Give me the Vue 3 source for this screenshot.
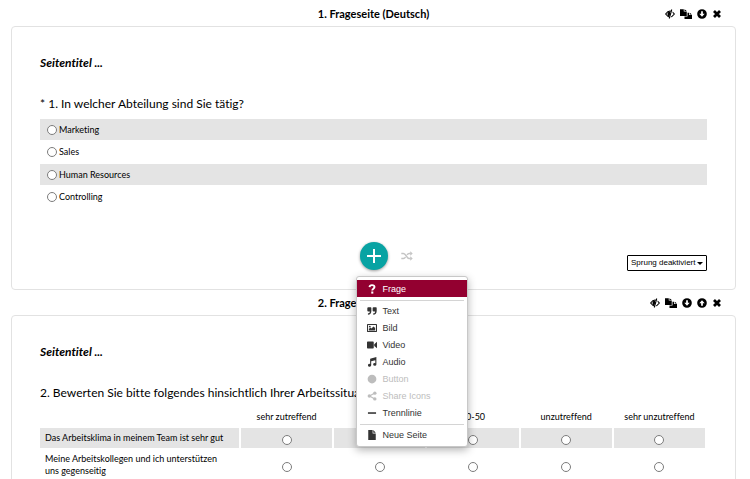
<script setup>
import { ref } from 'vue'

const departments = ['Marketing', 'Sales', 'Human Resources', 'Controlling']
const department = ref('')
const jump = ref('off')

const scale = ['sehr zutreffend', 'zutreffend', '50-50', 'unzutreffend', 'sehr unzutreffend']
const statements = [
  'Das Arbeitsklima in meinem Team ist sehr gut',
  'Meine Arbeitskollegen und ich unterstützen uns gegenseitig',
]

const pageActions = {
  first: ['preview', 'copy', 'down', 'remove'],
  middle: ['preview', 'copy', 'down', 'up', 'remove'],
}
const actionLabels = {
  preview: 'Vorschau',
  copy: 'Kopieren',
  down: 'Nach unten',
  up: 'Nach oben',
  remove: 'Löschen',
}

const icons = {
  preview:
    '<path d="M1 8Q8 -1.500 15 8Q8 17.500 1 8Z" fill="none" stroke="currentColor" stroke-width="1.800"/><path d="M8 4a4 4 0 1 0 0 8z"/><path d="M12 1L7.400 15" stroke="#fff" stroke-width="2.600"/><path d="M10.800 .8L6.800 15.200" stroke="currentColor" stroke-width="1.700"/>',
  copy:
    '<path d="M0 .5h5v3.500h4v7H0z"/><path d="M8 6h4v3.500h4V16H6v-4h4V6z"/><path d="M6 .5l3 2.700H6zM13 6l3 2.600h-3z"/>',
  down:
    '<path fill-rule="evenodd" d="M8 .3a7.700 7.700 0 1 0 0 15.400A7.700 7.700 0 0 0 8 .3zM6.600 3.600h2.800v4h2.900L8 12.400 3.700 7.600h2.900z"/>',
  up:
    '<path fill-rule="evenodd" d="M8 .3a7.700 7.700 0 1 0 0 15.400A7.700 7.700 0 0 0 8 .3zM6.600 12.400h2.800v-4h2.900L8 3.600 3.700 8.400h2.900z"/>',
  remove: '<path d="M3.200 3.200l9.600 9.600M12.800 3.200l-9.600 9.600" stroke="currentColor" stroke-width="4.400"/>',
  question:
    '<path d="M4 5C4.300 2.700 5.700 1.700 8 1.700c2.500 0 4 1.200 4 3.200 0 2.500-3.600 2.700-3.600 5.400" fill="none" stroke="currentColor" stroke-width="3"/><path d="M6.800 12h3.300v3.400H6.800z"/>',
  quote:
    '<path d="M2 2h3.400C6.600 2 7 2.600 7 3.600V8c0 3.600-2 6-5.500 6v-2.400c2 0 3-1 3-3H2C1 8.600.5 8 .5 7V3.600C.5 2.600 1 2 2 2zM10.500 2h3.400c1.200 0 1.600.6 1.600 1.600V8c0 3.600-2 6-5.500 6v-2.400c2 0 3-1 3-3h-2.500C9.500 8.600 9 8 9 7V3.600C9 2.600 9.500 2 10.500 2z"/>',
  image:
    '<path fill-rule="evenodd" d="M1.500 1.500h13c.8 0 1.500.7 1.500 1.500v10c0 .8-.7 1.500-1.500 1.500h-13C.7 14.500 0 13.800 0 13V3c0-.8.7-1.500 1.500-1.500zM1.700 3.200v9.600h12.600V3.200z"/><path d="M3 11.800V9.500l2.300-2.300L7 8.900l3.500-3.500L13 8v3.800z"/><circle cx="4.500" cy="5.700" r="1.400"/>',
  video:
    '<path d="M1.600 2.500h7.600c.9 0 1.600.7 1.600 1.600v7.800c0 .9-.7 1.600-1.600 1.600H1.600c-.9 0-1.600-.7-1.600-1.600V4.100c0-.9.700-1.600 1.600-1.600zM11.600 6.600L16 2.700v10.600l-4.400-3.900z"/>',
  music:
    '<path d="M5 2.700L15 0v11.800a2.600 2.200 0 1 1-1.700-2V5L6.700 6.800v6.400A2.600 2.200 0 1 1 5 11.200z"/>',
  circle: '<circle cx="8" cy="8" r="7"/>',
  share:
    '<path d="M12.500 3.300L4 8l8.500 4.700" fill="none" stroke="currentColor" stroke-width="1.800"/><circle cx="12.500" cy="3.400" r="2.700"/><circle cx="3.700" cy="8" r="2.700"/><circle cx="12.500" cy="12.600" r="2.700"/>',
  minus: '<path d="M1.500 6.800h13v2.500h-13z"/>',
  file: '<path d="M2 0h7v5.500h5V16H2z"/><path d="M10 0l4 4.500h-4z"/>',
}

const menu = [
  [{ icon: 'question', label: 'Frage', active: true }],
  [
    { icon: 'quote', label: 'Text' },
    { icon: 'image', label: 'Bild' },
    { icon: 'video', label: 'Video' },
    { icon: 'music', label: 'Audio' },
    { icon: 'circle', label: 'Button', disabled: true },
    { icon: 'share', label: 'Share Icons', disabled: true },
    { icon: 'minus', label: 'Trennlinie' },
  ],
  [{ icon: 'file', label: 'Neue Seite' }],
]
</script>

<template>
  <main class="editor">
    <section>
      <header class="page-head">
        <h2>1. Frageseite (Deutsch)</h2>
        <div class="actions">
          <button v-for="a in pageActions.first" :key="a" type="button" :class="a" :aria-label="actionLabels[a]">
            <svg viewBox="0 0 16 16" preserveAspectRatio="none" fill="currentColor" v-html="icons[a]"></svg>
          </button>
        </div>
      </header>
      <div class="card">
        <h3>Seitentitel ...</h3>
        <fieldset>
          <legend>* 1. In welcher Abteilung sind Sie tätig?</legend>
          <div class="options">
            <label v-for="d in departments" :key="d">
              <input v-model="department" type="radio" name="department" :value="d" />
              <span>{{ d }}</span>
            </label>
          </div>
        </fieldset>
        <footer class="card-foot">
          <div class="insert">
            <button type="button" class="add" aria-label="Element hinzufügen" aria-haspopup="menu" aria-expanded="true">
              <svg viewBox="0 0 14 14"><path d="M7 0v14M0 7h14" /></svg>
            </button>
            <div class="menu" role="menu">
              <div v-for="(group, g) in menu" :key="g" class="group" role="group">
                <button
                  v-for="item in group"
                  :key="item.label"
                  type="button"
                  role="menuitem"
                  :class="{ active: item.active }"
                  :disabled="item.disabled"
                >
                  <svg viewBox="0 0 16 16" fill="currentColor" v-html="icons[item.icon]"></svg>
                  <span>{{ item.label }}</span>
                </button>
              </div>
            </div>
          </div>
          <div class="foot-tools">
            <button type="button" class="shuffle" aria-label="Zufällige Reihenfolge">
              <svg viewBox="0 0 16 14" fill="none" stroke="currentColor" stroke-width="2">
                <path d="M0 3.500h3c3.500 0 4.500 7 8 7h2M0 10.500h3c1.300 0 2.200-.9 3-2M8 5.500c.8-1.100 1.700-2 3-2h2" />
                <path d="M12.500.5l3.500 3-3.500 3zM12.500 7.500l3.500 3-3.500 3z" fill="currentColor" stroke="none" />
              </svg>
            </button>
            <div class="jump">
              <select v-model="jump" aria-label="Sprung">
                <option value="off">Sprung deaktiviert</option>
              </select>
              <svg viewBox="0 0 6 3"><path d="M0 0h6L3 3z" /></svg>
            </div>
          </div>
        </footer>
      </div>
    </section>

    <section>
      <header class="page-head">
        <h2>2. Frageseite (Deutsch)</h2>
        <div class="actions">
          <button v-for="a in pageActions.middle" :key="a" type="button" :class="a" :aria-label="actionLabels[a]">
            <svg viewBox="0 0 16 16" preserveAspectRatio="none" fill="currentColor" v-html="icons[a]"></svg>
          </button>
        </div>
      </header>
      <div class="card">
        <h3>Seitentitel ...</h3>
        <p id="matrix-title" class="question">2. Bewerten Sie bitte folgendes hinsichtlich Ihrer Arbeitssituation</p>
        <table aria-labelledby="matrix-title">
          <thead>
            <tr>
              <td></td>
              <th v-for="s in scale" :key="s" scope="col">{{ s }}</th>
            </tr>
          </thead>
          <tbody>
            <tr v-for="(statement, i) in statements" :key="i">
              <th scope="row">{{ statement }}</th>
              <td v-for="s in scale" :key="s">
                <input type="radio" :name="'statement-' + i" :value="s" :aria-label="statement + ': ' + s" />
              </td>
            </tr>
          </tbody>
        </table>
      </div>
    </section>
  </main>
</template>

<style>
body {
  margin: 0;
  background: #fff;
}
</style>

<style scoped>
.editor {
  box-sizing: border-box;
  height: 100vh;
  overflow: hidden;
  padding: 1px 14px 0 11px;
  font-family: Lato, "Liberation Sans", sans-serif;
  font-size: 9px;
  line-height: 12px;
  font-variant-ligatures: none;
  color: #000;
}
button,
select {
  margin: 0;
  padding: 0;
  border: 0;
  background: none;
  color: inherit;
  font: inherit;
}
svg {
  display: block;
}
.page-head {
  display: grid;
  grid-template-columns: 1fr auto 1fr;
  align-items: center;
  height: 25px;
}
h2 {
  grid-column: 2;
  margin: 0;
  font-size: 11px;
  font-weight: 700;
}
.actions {
  display: flex;
  justify-content: flex-end;
  gap: 5px;
  padding-right: 14px;
}
.actions svg {
  width: 10px;
  height: 10px;
}
.actions .copy svg {
  width: 12px;
}
.card {
  border: 1px solid #e2e2e2;
  border-radius: 4px;
  padding: 28px 28px 18px;
}
h3 {
  margin: 0 0 23px;
  font-size: 12px;
  line-height: 16px;
  font-weight: 700;
  font-style: italic;
}
fieldset {
  margin: 0;
  padding: 0;
  border: 0;
  min-width: 0;
}
legend,
.question {
  margin: 0;
  padding: 0;
  font-size: 12px;
  line-height: 20px;
}
.options {
  display: grid;
  align-content: space-between;
  height: 89px;
  margin-top: 5px;
}
.options label {
  display: flex;
  align-items: center;
  gap: 2px;
  height: 21px;
  padding-left: 7px;
}
.options label:nth-child(odd),
tbody tr:nth-child(odd) > * {
  background: #e4e4e4;
}
input {
  appearance: none;
  box-sizing: border-box;
  width: 10px;
  height: 10px;
  margin: 0;
  border: 1px solid #7c7c7c;
  border-radius: 50%;
  background: #fff;
}
input:checked {
  background: #333;
}
.card-foot {
  display: grid;
  grid-template-columns: 1fr auto 1fr;
  height: 29px;
  margin-top: 34px;
}
.insert {
  grid-column: 2;
  position: relative;
  z-index: 1;
}
.add {
  display: grid;
  place-items: center;
  width: 28px;
  height: 28px;
  border-radius: 50%;
  background: #08a3a3;
  box-shadow: 0 1px 3px rgba(0, 0, 0, 0.4);
}
.add svg {
  width: 14px;
  height: 14px;
  stroke: #fff;
  stroke-width: 2;
}
.menu {
  position: absolute;
  top: 34px;
  left: -4px;
  box-sizing: border-box;
  width: 112px;
  padding: 3px 0;
  border: 1px solid #c8c8c8;
  border-radius: 3px;
  background: #fff;
  box-shadow: 0 3px 8px rgba(0, 0, 0, 0.3);
  font-family: "Liberation Sans", Arial, sans-serif;
  color: #333;
}
.group + .group::before {
  content: '';
  display: block;
  height: 1px;
  margin: 3px 3px 1px;
  background: #d4d4d4;
}
.menu button {
  display: flex;
  align-items: center;
  gap: 6px;
  width: 100%;
  height: 17px;
  padding-left: 10px;
}
.menu svg {
  width: 10px;
  height: 10px;
}
.menu button.active {
  background: #930030;
  color: #fff;
}
.menu button:disabled {
  color: #bdbdbd;
}
.foot-tools {
  display: flex;
  justify-content: space-between;
  padding-left: 13px;
}
.shuffle {
  height: 28px;
  color: #c4c4c4;
}
.shuffle svg {
  width: 12px;
  height: 10px;
}
.jump {
  align-self: flex-end;
  display: flex;
  align-items: center;
  gap: 1px;
  box-sizing: border-box;
  height: 16px;
  padding: 0 3px;
  border: 1px solid #000;
  border-radius: 1px;
  font-family: "Liberation Sans", Arial, sans-serif;
  font-size: 8px;
}
.jump select {
  appearance: none;
}
.jump svg {
  width: 6px;
  height: 3px;
}
table {
  width: calc(100% + 2px);
  margin-left: -2px;
  table-layout: fixed;
  border-collapse: separate;
  border-spacing: 2px 0;
}
th,
td {
  padding: 0;
  font-weight: 400;
  text-align: center;
}
thead td {
  width: 199px;
}
thead tr {
  height: 25px;
}
thead th {
  padding-top: 2px;
  white-space: nowrap;
}
tbody th {
  height: 20px;
  padding: 0 12px 0 5px;
  text-align: left;
}
tbody tr + tr > * {
  height: 34px;
}
tbody input {
  display: block;
  margin: 3px auto 0;
}
</style>
